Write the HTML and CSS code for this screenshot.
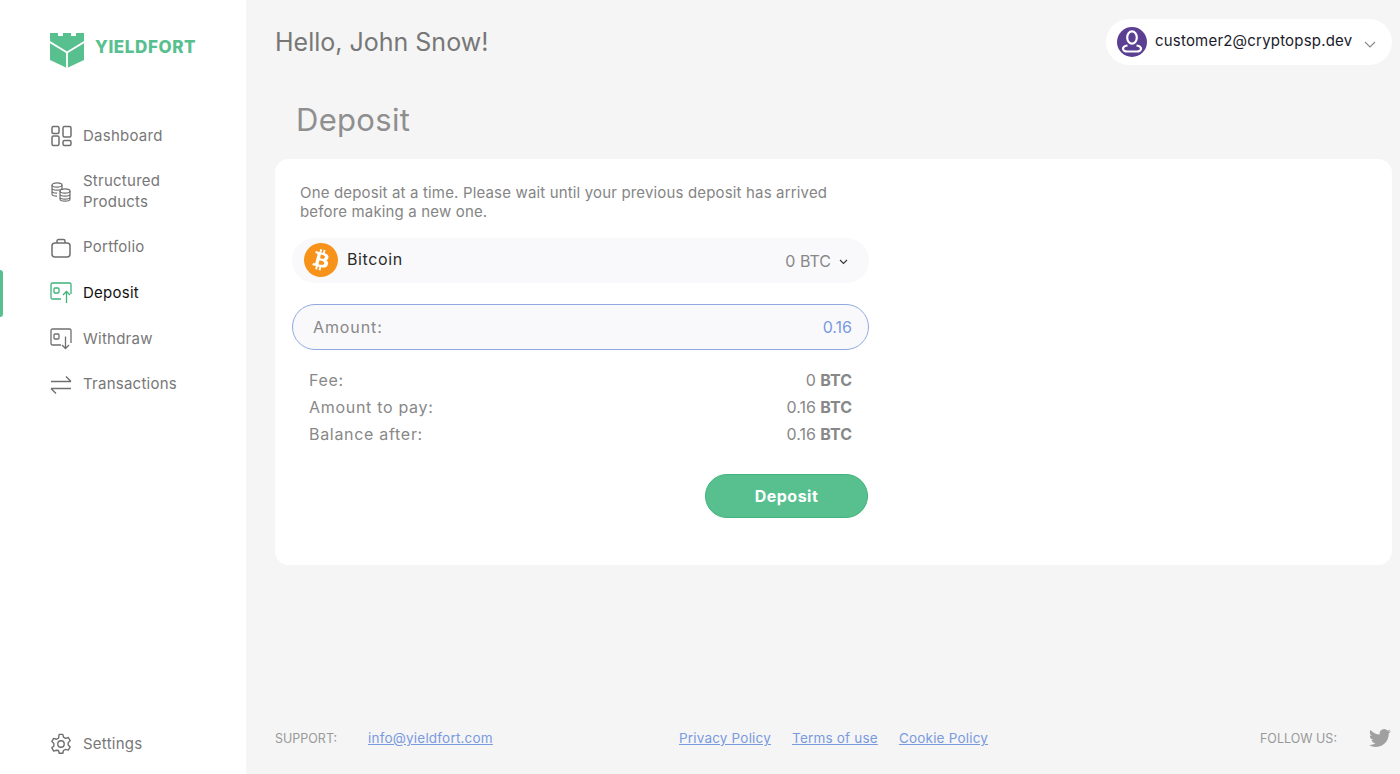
FILE: index.html
```html
<!DOCTYPE html>
<html lang="en">
<head>
<meta charset="utf-8">
<title>Deposit</title>
<link rel="stylesheet" href="styles.css">
</head>
<body>
<div class="app">
  <aside class="sidebar">
    <div class="logo">
      <svg class="logo-mark" viewBox="0 0 34 35" width="34" height="35">
        <path fill="#58c08f" d="M0 0h8v3h5V0h8v3h5V0h8v27L17 35 0 27z"/>
        <path fill="none" stroke="#fff" stroke-width="1.800" d="M-1 8.500l18 11 18-11M17 19.500V36"/>
      </svg>
      <span class="logo-text">YIELDFORT</span>
    </div>
    <nav class="nav">
      <a class="nav-item">
        <svg class="nav-icon" viewBox="0 0 22 22" width="22" height="22"><g fill="none" stroke="currentColor" stroke-width="1.500"><rect x="2" y="1.500" width="7" height="7" rx="1.500"/><rect x="2" y="11" width="7" height="9.500" rx="1.500"/><rect x="13" y="1.500" width="8" height="10.500" rx="1.500"/><rect x="13" y="15.500" width="8" height="5" rx="1.500"/></g></svg>
        <span>Dashboard</span>
      </a>
      <a class="nav-item">
        <svg class="nav-icon" viewBox="0 0 22 22" width="22" height="22"><g fill="none" stroke="currentColor" stroke-width="1.200"><ellipse cx="7" cy="4" rx="5" ry="2.200"/><path d="M2 4v9c0 1.200 2.200 2.200 5 2.200M2 7c0 1.200 2.200 2.200 5 2.200s5-1 5-2.200M2 10c0 1.200 2.200 2.200 5 2.200M12 4v4"/><ellipse cx="15" cy="10" rx="5" ry="2.200"/><path d="M10 10v8c0 1.200 2.200 2.200 5 2.200s5-1 5-2.200v-8M10 13c0 1.200 2.200 2.200 5 2.200s5-1 5-2.200M10 16c0 1.200 2.200 2.200 5 2.200s5-1 5-2.200"/></g></svg>
        <span>Structured<br>Products</span>
      </a>
      <a class="nav-item">
        <svg class="nav-icon" viewBox="0 0 22 22" width="22" height="22"><g fill="none" stroke="currentColor" stroke-width="1.500"><rect x="2" y="6" width="18" height="14" rx="3"/><path d="M7 6V4c0-.800.600-1.500 1.500-1.500h5c.900 0 1.500.700 1.500 1.500v2"/></g></svg>
        <span>Portfolio</span>
      </a>
      <a class="nav-item active">
        <svg class="nav-icon" viewBox="0 0 22 22" width="22" height="22"><g fill="none" stroke="#3eb37c" stroke-width="1.300"><path d="M11 17H2.500A1.500 1.500 0 0 1 1 15.500v-13A1.500 1.500 0 0 1 2.500 1h17A1.500 1.500 0 0 1 21 2.500V12"/><rect x="4" y="6" width="5" height="5" rx="1"/><path d="M16.500 21V9.500M13 13l3.500-3.500L20 13"/></g></svg>
        <span>Deposit</span>
      </a>
      <a class="nav-item">
        <svg class="nav-icon" viewBox="0 0 22 22" width="22" height="22"><g fill="none" stroke="currentColor" stroke-width="1.300"><path d="M11 17H2.500A1.500 1.500 0 0 1 1 15.500v-13A1.500 1.500 0 0 1 2.500 1h17A1.500 1.500 0 0 1 21 2.500V15"/><rect x="4" y="6" width="5" height="5" rx="1"/><path d="M15.500 8.500v12M12 17l3.500 3.500L19 17"/></g></svg>
        <span>Withdraw</span>
      </a>
      <a class="nav-item">
        <svg class="nav-icon" viewBox="0 0 22 22" width="22" height="22"><g fill="none" stroke="currentColor" stroke-width="1.400"><path d="M1 7.500h20M16 2.500l5 5M1 14.500h20M1 14.500l5 5"/></g></svg>
        <span>Transactions</span>
      </a>
    </nav>
    <a class="nav-item settings">
      <svg class="nav-icon" viewBox="0 0 24 24" width="22" height="22"><g fill="none" stroke="currentColor" stroke-width="1.500" stroke-linejoin="round"><circle cx="12" cy="12" r="3.500"/><path d="M10 1.500h4l.7 3 2.300 1.300 3-.9 2 3.500-2.200 2.100v2.600l2.200 2.100-2 3.500-3-.9-2.300 1.300-.7 3h-4l-.7-3L7 18.800l-3 .9-2-3.500 2.200-2.100v-2.600L2 9.400l2-3.500 3 .9 2.300-1.300z"/></g></svg>
      <span>Settings</span>
    </a>
  </aside>
  <main class="main">
    <header class="topbar">
      <h1 class="greeting">Hello, John Snow!</h1>
      <div class="user">
        <svg class="avatar" viewBox="0 0 30 30" width="30" height="30"><circle cx="15" cy="15" r="15" fill="#5b3f93"/><g fill="none" stroke="#fff" stroke-width="2.200"><ellipse cx="15" cy="10.500" rx="4.800" ry="6.200"/><path d="M10.500 18.500c-3 .5-4.500 1.800-4.500 3.300s2 2.700 4 2.700h10c2 0 4-1.200 4-2.700s-1.500-2.800-4.500-3.300"/></g></svg>
        <span class="user-email">customer2@cryptopsp.dev</span>
        <svg class="user-caret" viewBox="0 0 12 7" width="12" height="7"><path d="M1 1l5 5 5-5" fill="none" stroke="#888" stroke-width="1.100"/></svg>
      </div>
    </header>
    <h2 class="title">Deposit</h2>
    <section class="card">
      <div class="form">
        <p class="notice">One deposit at a time. Please wait until your previous deposit has arrived<br>before making a new one.</p>
        <div class="select">
          <svg class="coin" viewBox="0 0 24 24" width="34" height="34"><circle cx="12" cy="12" r="11" fill="#fff"/><path fill="#f7931a" d="M23.638 14.904c-1.602 6.43-8.113 10.34-14.542 8.736C2.67 22.05-1.244 15.525.362 9.105 1.962 2.67 8.475-1.243 14.9.358c6.43 1.605 10.342 8.115 8.738 14.548v-.002zm-6.35-4.613c.24-1.59-.974-2.45-2.64-3.03l.54-2.153-1.315-.33-.525 2.107c-.345-.087-.705-.167-1.064-.25l.526-2.127-1.32-.33-.54 2.165c-.285-.067-.565-.132-.84-.2l-1.815-.45-.35 1.407s.975.225.955.236c.535.136.63.486.615.766l-1.477 5.92c-.075.166-.24.406-.614.314.015.02-.96-.24-.96-.24l-.66 1.51 1.71.426.93.242-.54 2.19 1.32.327.54-2.17c.36.1.705.19 1.05.273l-.51 2.154 1.32.33.545-2.19c2.24.427 3.93.257 4.64-1.774.57-1.637-.03-2.58-1.217-3.196.854-.193 1.5-.76 1.68-1.93h.01zm-3.01 4.22c-.404 1.64-3.157.75-4.05.53l.72-2.9c.896.23 3.757.67 3.33 2.37zm.41-4.24c-.37 1.49-2.662.735-3.405.55l.654-2.64c.744.18 3.137.524 2.75 2.084v.006z"/></svg>
          <span class="coin-name">Bitcoin</span>
          <span class="coin-balance">0 BTC</span>
          <svg class="select-caret" viewBox="0 0 9 6" width="9" height="6"><path d="M1 1l3.500 3.500L8 1" fill="none" stroke="#333" stroke-width="1.100"/></svg>
        </div>
        <div class="amount">
          <span class="amount-label">Amount:</span>
          <span class="amount-value">0.16</span>
        </div>
        <dl class="summary">
          <div class="summary-row"><dt>Fee:</dt><dd>0 <b>BTC</b></dd></div>
          <div class="summary-row"><dt>Amount to pay:</dt><dd>0.16 <b>BTC</b></dd></div>
          <div class="summary-row"><dt>Balance after:</dt><dd>0.16 <b>BTC</b></dd></div>
        </dl>
        <div class="actions"><button class="btn" type="button">Deposit</button></div>
      </div>
    </section>
    <footer class="footer">
      <div class="foot-left"><span class="foot-label">SUPPORT:</span><a class="link">info@yieldfort.com</a></div>
      <div class="foot-center"><a class="link">Privacy Policy</a><a class="link">Terms of use</a><a class="link">Cookie Policy</a></div>
      <div class="foot-right"><span class="foot-label">FOLLOW US:</span>
        <svg class="twitter" viewBox="0 0 24 24" width="22" height="22"><path fill="#a0a0a0" d="M23.953 4.57a10 10 0 01-2.825.775 4.958 4.958 0 002.163-2.723c-.951.555-2.005.959-3.127 1.184a4.92 4.92 0 00-8.384 4.482C7.69 8.095 4.067 6.13 1.64 3.162a4.822 4.822 0 00-.666 2.475c0 1.71.87 3.213 2.188 4.096a4.904 4.904 0 01-2.228-.616v.06a4.923 4.923 0 003.946 4.827 4.996 4.996 0 01-2.212.085 4.936 4.936 0 004.604 3.417 9.867 9.867 0 01-6.102 2.105c-.39 0-.779-.023-1.17-.067a13.995 13.995 0 007.557 2.209c9.053 0 13.998-7.496 13.998-13.985 0-.21 0-.42-.015-.63A9.935 9.935 0 0024 4.59z"/></svg>
      </div>
    </footer>
  </main>
</div>
</body>
</html>
```
FILE: styles.css
```css
* { box-sizing: border-box; }
html, body { margin: 0; height: 100%; }
body {
  font-family: Inter, "Noto Sans", sans-serif;
  color: #777;
  background: #f5f5f5;
  overflow: hidden;
}
.app { display: flex; height: 100vh; }

.sidebar {
  width: 246px;
  flex: none;
  background: #fff;
  display: flex;
  flex-direction: column;
  padding: 30px 0 20px 50px;
}
.logo { display: flex; align-items: center; gap: 11px; height: 37px; }
.logo-mark { flex: none; margin-top: 4px; }
.logo-text { font-size: 17px; font-weight: 800; color: #58c08f; letter-spacing: .6px; margin-top: -3px; }

.nav { display: flex; flex-direction: column; gap: 25.200px; margin-top: 58.500px; }
.nav-item {
  position: relative;
  display: flex;
  align-items: center;
  gap: 11px;
  font-size: 15px;
  letter-spacing: .25px;
  line-height: 20.500px;
  color: #777;
}
.nav-icon { flex: none; color: #6f6f6f; margin-block: -1px; }
.nav-item.active { color: #111; }
.nav-item.active::before {
  content: "";
  position: absolute;
  left: -50px;
  top: -13px;
  bottom: -13px;
  width: 3px;
  background: #58c08f;
  border-radius: 0 3px 3px 0;
}
.settings { margin-top: auto; }

.main {
  flex: 1;
  min-width: 0;
  display: flex;
  flex-direction: column;
  padding: 19px 8px 24px 29px;
}
.topbar { display: flex; justify-content: space-between; align-items: center; height: 46px; }
.greeting { margin: 0; font-size: 25px; font-weight: 400; color: #777; }
.user {
  display: flex;
  align-items: center;
  width: 286px;
  height: 46px;
  padding: 0 16px 0 11px;
  background: #fff;
  border-radius: 23px;
}
.avatar { flex: none; }
.user-email { margin: -3px 0 0 8px; font-size: 15px; letter-spacing: .2px; color: #1a1a2a; }
.user-caret { margin-left: auto; margin-top: 4px; }

.title {
  margin: 35px 0 19px 21px;
  font-size: 31px;
  letter-spacing: .3px;
  line-height: 40px;
  font-weight: 400;
  color: #8f8f8f;
}
.card {
  background: #fff;
  border-radius: 14px;
  height: 406px;
  padding: 25px 17px;
}
.form { width: 577px; }
.notice {
  margin: 0 0 17px 8px;
  font-size: 15px;
  letter-spacing: .16px;
  line-height: 18.500px;
  color: #858585;
}
.select {
  display: flex;
  align-items: center;
  height: 45px;
  padding: 0 21px 0 12px;
  background: #f9f9fb;
  border-radius: 23px;
}
.coin { flex: none; margin-top: -1px; }
.coin-name { margin: -3px 0 0 9px; font-size: 16px; letter-spacing: .6px; color: #2a2a2a; }
.coin-balance { margin-left: auto; font-size: 16px; color: #888; }
.select-caret { margin-left: 8px; margin-top: 2px; }
.amount {
  display: flex;
  justify-content: space-between;
  align-items: center;
  height: 46px;
  margin-top: 21px;
  padding: 0 16px 0 20px;
  background: #f9f9fc;
  border: 1px solid #8fa9e0;
  border-radius: 23px;
  font-size: 16px;
}
.amount-label { color: #888; letter-spacing: .9px; }
.amount-value { color: #7a9ae0; }
.summary { margin: 17px 0 0; padding: 0 17px; }
.summary-row {
  display: flex;
  justify-content: space-between;
  height: 26.800px;
  line-height: 26.800px;
  font-size: 16px;
  color: #888;
}
.summary-row dt { letter-spacing: .7px; }
.summary-row dd { margin: 0; }
.summary-row b { font-weight: 700; color: #888; }
.actions { display: flex; justify-content: flex-end; margin-top: 27px; padding-right: 1px; }
.btn {
  width: 163px;
  height: 44px;
  background: #58c08f;
  border: 1px solid #3eb37c;
  border-radius: 22px;
  color: #fff;
  font: 700 16px Inter, "Noto Sans", sans-serif;
  letter-spacing: .5px;
}

.footer {
  margin-top: auto;
  display: grid;
  grid-template-columns: 1fr auto 1fr;
  align-items: center;
  height: 24px;
  font-size: 13.500px;
  letter-spacing: .2px;
}
.foot-left { display: flex; align-items: center; gap: 31px; }
.foot-center { display: flex; gap: 21px; }
.foot-right { display: flex; justify-content: flex-end; align-items: center; gap: 32px; padding-right: 1px; }
.foot-label { color: #999; font-size: 12.500px; letter-spacing: 0; }
.link { color: #7a9ae0; text-decoration: underline; }
.twitter { flex: none; }
```
